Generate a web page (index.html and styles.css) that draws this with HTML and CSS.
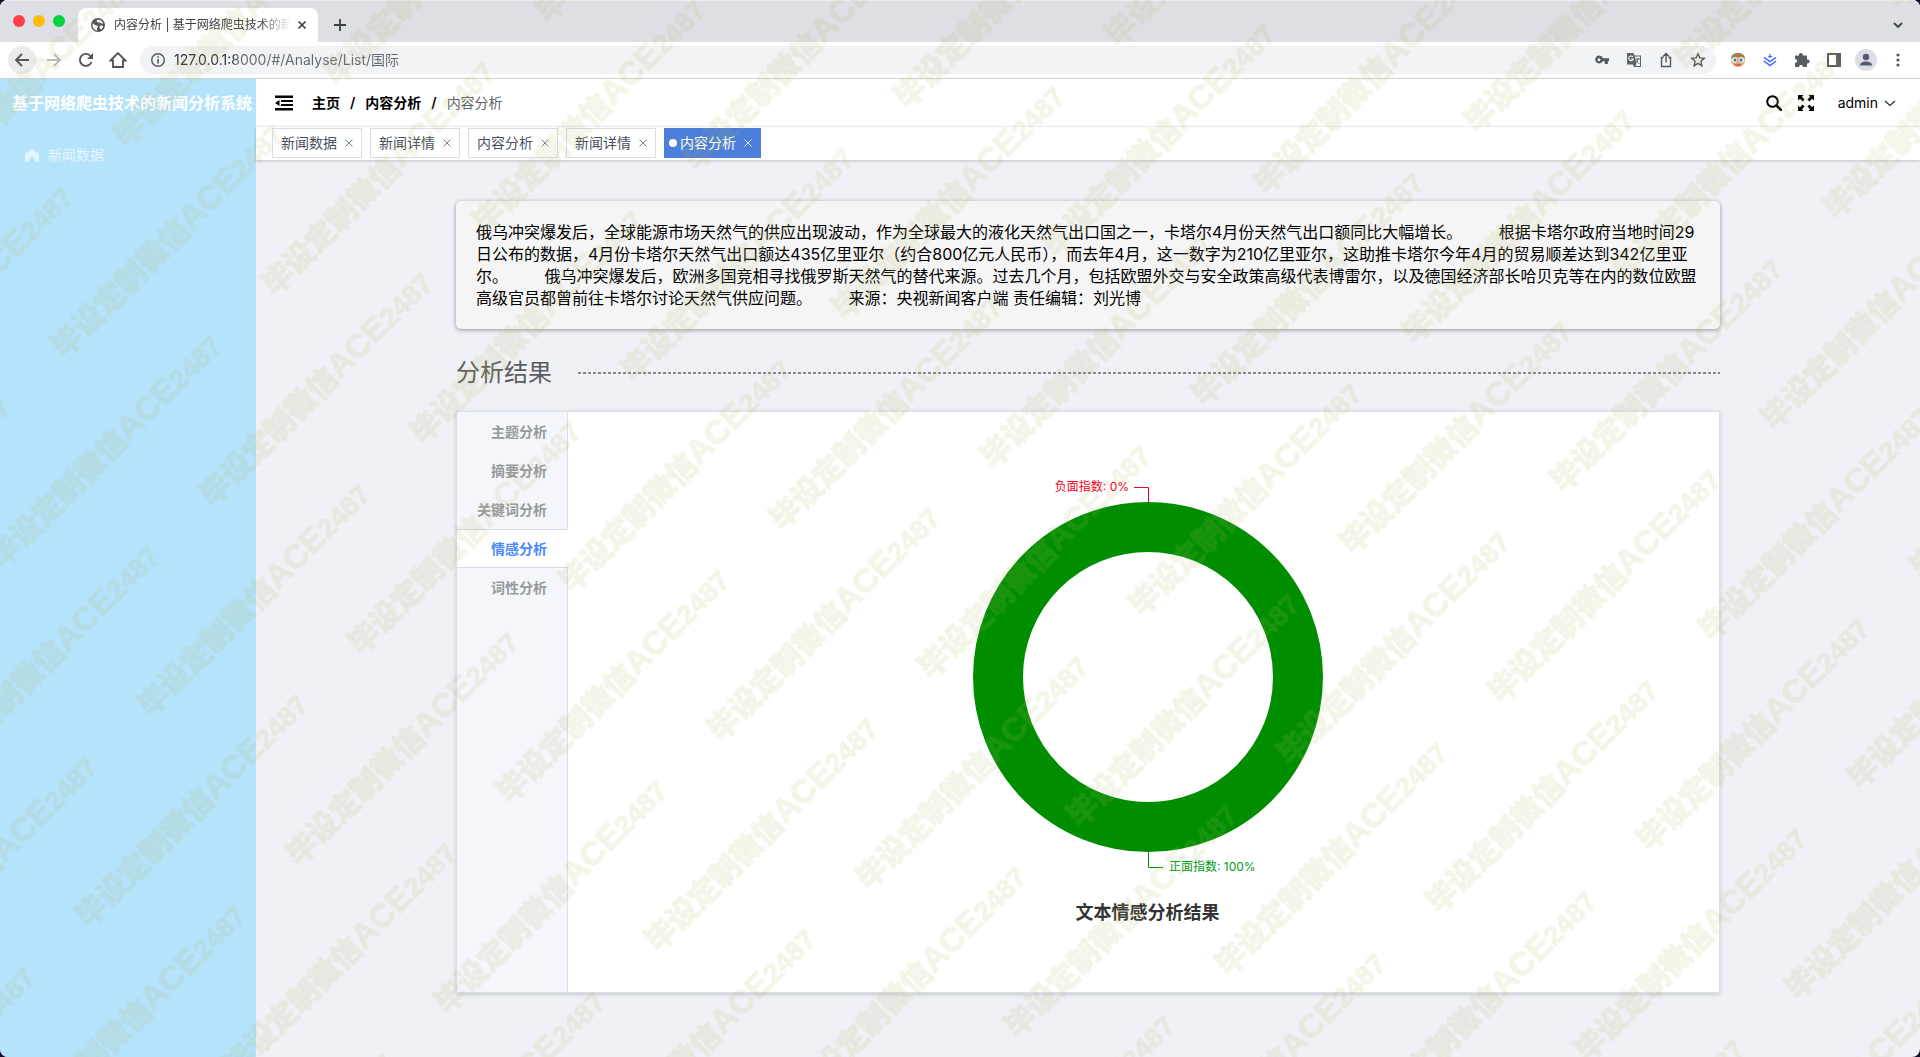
FILE: index.html
```html
<!DOCTYPE html>
<html lang="zh-CN">
<head>
<meta charset="utf-8">
<title>内容分析 | 基于网络爬虫技术的新闻分析系统</title>
<link rel="stylesheet" href="styles.css">
</head>
<body>
<div class="window">
  <header class="browser">
    <div class="tabstrip">
      <div class="lights"><i class="light red"></i><i class="light yellow"></i><i class="light green"></i></div>
      <div class="browser-tab">
        <svg width="14" height="14" viewBox="0 0 14 14"><circle cx="7" cy="7" r="7" fill="#4d5156"/><path d="M2 5.500C3.500 6 4 7.500 5.500 7.500S7.500 8.500 6.500 9.500 6 11.500 6.500 12.500C4 12.500 1.500 10.500 1.500 7zM6 2C5 3.500 6.500 4.500 8 4.500S10.500 6 12.300 5.500C11.500 3 9 1.300 6 2zM9 8c1-.8 2.500-.5 3.200 0-.3 1.500-1.200 3-2.400 3.500C9 10.500 8 9 9 8z" fill="#fff"/></svg>
        <span class="browser-tab-title">内容分析 | 基于网络爬虫技术的新</span>
        <button class="mini" aria-label="关闭标签页"><svg width="16" height="16" viewBox="0 0 16 16"><path d="M4.500 4.500l7 7M11.500 4.500l-7 7" stroke="#3c4043" stroke-width="1.700"/></svg></button>
      </div>
      <button class="tool new-tab" aria-label="新标签页"><svg width="16" height="16" viewBox="0 0 16 16"><path d="M8 2v12M2 8h12" stroke="#3c4043" stroke-width="1.800"/></svg></button>
      <button class="tool tab-search" aria-label="搜索标签页"><svg width="16" height="16" viewBox="0 0 16 16"><path d="M4 6l4 4 4-4" fill="none" stroke="#3c4043" stroke-width="1.800"/></svg></button>
    </div>
    <div class="toolbar">
      <button class="tool back" aria-label="后退"><svg width="18" height="18" viewBox="0 0 18 18"><path d="M16 9H3M9 3L3 9l6 6" fill="none" stroke="#54585d" stroke-width="1.900"/></svg></button>
      <button class="tool" aria-label="前进"><svg width="18" height="18" viewBox="0 0 18 18"><path d="M2 9h13M9 3l6 6-6 6" fill="none" stroke="#babcbe" stroke-width="1.900"/></svg></button>
      <button class="tool" aria-label="重新加载"><svg width="18" height="18" viewBox="0 0 18 18"><path d="M14.500 11A6 6 0 1 1 13.300 4.800" fill="none" stroke="#54585d" stroke-width="1.900"/><path d="M16 2v6h-6z" fill="#54585d"/></svg></button>
      <button class="tool" aria-label="主页"><svg width="18" height="18" viewBox="0 0 18 18"><path d="M1.500 9.500L9 2l7.500 7.500H14V16H4V9.500z" fill="none" stroke="#54585d" stroke-width="1.900"/></svg></button>
      <div class="omnibox">
        <button class="tool" aria-label="网站信息"><svg width="16" height="16" viewBox="0 0 16 16"><circle cx="8" cy="8" r="6.300" fill="none" stroke="#54585d" stroke-width="1.400"/><path d="M8 7v4.500M8 4.300v1.500" stroke="#54585d" stroke-width="1.600"/></svg></button>
        <input class="url" type="text" aria-label="地址栏" value="127.0.0.1:8000/#/Analyse/List/国际">
        <button class="tool" aria-label="密码"><svg width="16" height="16" viewBox="0 0 16 16"><path fill-rule="evenodd" d="M5 3.500a4 4 0 0 1 3.800 2.800H15v3h-1.200V12h-3V9.300h-2A4 4 0 1 1 5 3.500zm0 2.700a1.500 1.500 0 1 0 0 3 1.500 1.500 0 0 0 0-3z" fill="#54585d"/></svg></button>
        <button class="tool" aria-label="翻译"><svg width="16" height="16" viewBox="0 0 16 16"><path d="M1 1h6.500l1 2.500H15V15H8l-1-2.500H1z" fill="#5f6368"/><path d="M9 4.500h5v9.500H9.500l1-2z" fill="#f1f3f4"/><path d="M7 5A2.300 2.300 0 1 0 7.300 7H5" fill="none" stroke="#f1f3f4" stroke-width="1.100"/><path d="M9.800 7H14M12 6v1c-.3 2-1.500 3.500-2.500 4M10.500 8.500c.5 1.500 1.500 2.500 3 3" fill="none" stroke="#5f6368"/></svg></button>
        <button class="tool" aria-label="分享"><svg width="16" height="16" viewBox="0 0 16 16"><path d="M5.500 5.500h-2v9h9v-9h-2M8 10.500V2M5 4.500l3-3 3 3" fill="none" stroke="#54585d" stroke-width="1.400"/></svg></button>
        <button class="tool" aria-label="收藏"><svg width="16" height="16" viewBox="0 0 16 16"><path d="M8 1.800l1.800 4.100 4.500.4-3.400 3 1 4.400L8 11.400l-3.900 2.300 1-4.400-3.400-3 4.500-.4z" fill="none" stroke="#54585d" stroke-width="1.400"/></svg></button>
      </div>
      <button class="tool" aria-label="扩展：头像"><svg width="16" height="16" viewBox="0 0 16 16"><circle cx="8" cy="8" r="7" fill="#eba374"/><path d="M1 7C1 3 4 1 8 1s7 2 7 6l-3-2H4z" fill="#a37e4c"/><circle cx="4.500" cy="8" r="2.800" fill="#e2f4fa"/><circle cx="11.500" cy="8" r="2.800" fill="#e2f4fa"/><circle cx="5" cy="8" r="1.500" fill="#357f9b"/><circle cx="11" cy="8" r="1.500" fill="#357f9b"/><path d="M5 13h6" stroke="#d94c3e" stroke-width="1.500"/></svg></button>
      <button class="tool" aria-label="扩展：下载"><svg width="16" height="16" viewBox="0 0 16 16"><path d="M2 5.500l6 4 6-4M2 9l6 4.500L14 9" fill="none" stroke="#3d62f5" stroke-width="1.500"/><path d="M5.500 4L8 6l2.500-2M8 2l1.200 1L8 4 6.800 3z" fill="#3d62f5"/></svg></button>
      <button class="tool" aria-label="扩展程序"><svg width="16" height="16" viewBox="0 0 16 16"><path d="M1 4.500Q1 3.500 2 3.500h3a2 2 0 1 1 3.800 0H12q1 0 1 1v3a2 2 0 1 1 0 3.800V14q0 1-1 1H9a2 2 0 0 0-4 0H2q-1 0-1-1v-3a2 2 0 0 0 0-4z" fill="#585c61"/></svg></button>
      <button class="tool" aria-label="侧边栏"><svg width="16" height="16" viewBox="0 0 16 16"><path fill-rule="evenodd" d="M1 1h14v14H1zm2 2v10h7V3z" fill="#585c61"/></svg></button>
      <button class="tool" aria-label="个人资料"><svg width="22" height="22" viewBox="0 0 22 22"><circle cx="11" cy="11" r="11" fill="#dcdee6"/><circle cx="11" cy="8" r="3.200" fill="#515a70"/><path d="M5 16.500c0-3 3-4 6-4s6 1 6 4z" fill="#515a70"/></svg></button>
      <button class="tool" aria-label="菜单"><svg width="16" height="16" viewBox="0 0 16 16" fill="#54585d"><circle cx="8" cy="3" r="1.600"/><circle cx="8" cy="8" r="1.600"/><circle cx="8" cy="13" r="1.600"/></svg></button>
    </div>
  </header>

  <div class="app">
    <aside class="sidebar">
      <h1 class="brand">基于网络爬虫技术的新闻分析系统</h1>
      <a class="menu-item" href="#news"><svg width="16" height="16" viewBox="0 0 16 16"><path d="M8 1.500L15 7v7.500h-4.500v-4h-5v4H1V7z" fill="currentColor"/></svg>新闻数据</a>
    </aside>
    <div class="main">
      <div class="navbar">
        <button class="icon-btn" aria-label="收起菜单"><svg width="18" height="16" viewBox="0 0 18 16"><path d="M0 .500h18v2.500H0zM6 5h12v2H6zM6 9h12v2H6zM0 13h18v2.500H0zM0 8l4.500-3v6z"/></svg></button>
        <nav class="crumbs" aria-label="面包屑"><a href="#home">主页</a><b>/</b><a href="#analyse">内容分析</a><b>/</b><span>内容分析</span></nav>
        <div class="nav-right">
          <button class="icon-btn" aria-label="搜索"><svg width="16" height="16" viewBox="0 0 16 16"><circle cx="6.500" cy="6.500" r="5.300" fill="none" stroke="#000" stroke-width="2"/><path d="M10.500 10.500L15 15" stroke="#000" stroke-width="2.600" stroke-linecap="round"/></svg></button>
          <button class="icon-btn" aria-label="全屏"><svg width="16" height="16" viewBox="0 0 16 16"><path d="M0 0h5.500L4 1.800l2.600 2.600-2 2L2 3.800 0 5.500zM16 0v5.500l-2-1.700-2.600 2.600-2-2L12 1.800 10.500 0zM0 16v-5.500l2 1.700 2.600-2.600 2 2L4 14.200 5.500 16zM16 16h-5.500l1.500-1.800-2.600-2.600 2-2 2.600 2.600 2-1.700z"/></svg></button>
          <button class="user">admin<svg width="12" height="12" viewBox="0 0 12 12"><path d="M1 4L6 8.500 11 4" fill="none" stroke="#222" stroke-width="1.100"/></svg></button>
        </div>
      </div>
      <div class="tags">
        <div class="tag"><a href="#t1">新闻数据</a><button aria-label="关闭"><svg width="10" height="10" viewBox="0 0 10 10"><path d="M1.500 1.500l7 7M8.500 1.500l-7 7" stroke="currentColor"/></svg></button></div>
        <div class="tag"><a href="#t2">新闻详情</a><button aria-label="关闭"><svg width="10" height="10" viewBox="0 0 10 10"><path d="M1.500 1.500l7 7M8.500 1.500l-7 7" stroke="currentColor"/></svg></button></div>
        <div class="tag"><a href="#t3">内容分析</a><button aria-label="关闭"><svg width="10" height="10" viewBox="0 0 10 10"><path d="M1.500 1.500l7 7M8.500 1.500l-7 7" stroke="currentColor"/></svg></button></div>
        <div class="tag"><a href="#t4">新闻详情</a><button aria-label="关闭"><svg width="10" height="10" viewBox="0 0 10 10"><path d="M1.500 1.500l7 7M8.500 1.500l-7 7" stroke="currentColor"/></svg></button></div>
        <div class="tag current"><a href="#t5">内容分析</a><button aria-label="关闭"><svg width="10" height="10" viewBox="0 0 10 10"><path d="M1.500 1.500l7 7M8.500 1.500l-7 7" stroke="currentColor"/></svg></button></div>
      </div>
      <main class="content">
        <p class="article">俄乌冲突爆发后，全球能源市场天然气的供应出现波动，作为全球最大的液化天然气出口国之一，卡塔尔4月份天然气出口额同比大幅增长。 　　根据卡塔尔政府当地时间29日公布的数据，4月份卡塔尔天然气出口额达435亿里亚尔（约合800亿元人民币），而去年4月，这一数字为210亿里亚尔，这助推卡塔尔今年4月的贸易顺差达到342亿里亚尔。 　　俄乌冲突爆发后，欧洲多国竞相寻找俄罗斯天然气的替代来源。过去几个月，包括欧盟外交与安全政策高级代表博雷尔，以及德国经济部长哈贝克等在内的数位欧盟高级官员都曾前往卡塔尔讨论天然气供应问题。 　　来源：央视新闻客户端 责任编辑：刘光博</p>
        <h2 class="section-title">分析结果</h2>
        <section class="result">
          <div class="result-tabs" role="tablist">
            <button role="tab">主题分析</button>
            <button role="tab">摘要分析</button>
            <button role="tab">关键词分析</button>
            <button role="tab" class="active" aria-selected="true">情感分析</button>
            <button role="tab">词性分析</button>
          </div>
          <figure class="chart">
            <svg width="400" height="400" viewBox="0 0 400 400">
              <circle cx="200" cy="200" r="150" fill="none" stroke="#008e00" stroke-width="50"/>
              <path d="M200.500 25V10.500H186" fill="none" stroke="#f00024"/>
              <path d="M200.500 375v15.500H215" fill="none" stroke="#008e00"/>
              <text x="181" y="14" text-anchor="end" fill="#f00024">负面指数: 0%</text>
              <text x="221" y="394" fill="#009a1c">正面指数: 100%</text>
            </svg>
            <figcaption>文本情感分析结果</figcaption>
          </figure>
        </section>
      </main>
    </div>
  </div>

  <svg class="watermark" aria-hidden="true">
    <defs>
      <pattern id="mark" width="386" height="210" patternUnits="userSpaceOnUse" patternTransform="translate(1037 800) rotate(-45)">
        <text x="10" y="50">毕设定制微信<tspan class="latin">ACE</tspan><tspan class="digits">2487</tspan></text>
        <text x="203" y="155">毕设定制微信<tspan class="latin">ACE</tspan><tspan class="digits">2487</tspan></text>
        <text x="-183" y="155">毕设定制微信<tspan class="latin">ACE</tspan><tspan class="digits">2487</tspan></text>
      </pattern>
    </defs>
    <rect width="100%" height="100%" fill="url(#mark)" stroke="none"/>
  </svg>
</div>
</body>
</html>
```
FILE: styles.css
```css
* { box-sizing: border-box; }

body {
  margin: 0;
  background: #10102c;
  font: 14px/20px Inter, "Noto Sans CJK SC", sans-serif;
  color: #000;
}

button {
  padding: 0;
  border: 0;
  background: none;
  color: inherit;
  font: inherit;
  cursor: pointer;
}

a { color: inherit; text-decoration: none; }
svg { display: block; flex: none; }

.window {
  position: relative;
  display: flex;
  flex-direction: column;
  min-height: 100vh;
  overflow: hidden;
  border-radius: 8px;
  background: #f0f1f6;
}

/* browser frame */
.browser { border-bottom: 1px solid #cfcfd2; background: #fff; }

.tabstrip {
  display: flex;
  align-items: flex-end;
  height: 42px;
  padding: 0 8px 0 13px;
  border-top: 1px solid #ececf0;
  background: #dedfe5;
}

.lights { display: flex; align-items: center; gap: 8px; height: 42px; margin-right: 13px; }
.light { width: 12px; height: 12px; border-radius: 50%; }
.red { background: #fc4049; }
.yellow { background: #fdbc0b; }
.green { background: #05d53c; }

.browser-tab {
  display: flex;
  align-items: center;
  width: 240px;
  height: 34px;
  padding: 0 8px 0 13px;
  border-radius: 8px 8px 0 0;
  background: #fff;
  color: #3c4043;
  font-size: 12px;
}

.browser-tab-title {
  flex: 1;
  margin: 0 3px 0 9px;
  overflow: hidden;
  white-space: nowrap;
  mask-image: linear-gradient(to right, #000 82%, transparent);
}

.mini { width: 16px; height: 16px; }

.tool {
  display: flex;
  flex: none;
  align-items: center;
  justify-content: center;
  width: 28px;
  height: 28px;
  border-radius: 50%;
}

.new-tab { margin: 0 0 3px 8px; }
.tab-search { margin: 0 0 3px auto; }

.toolbar { display: flex; align-items: center; gap: 4px; height: 36px; padding: 0 8px; }
.back { background: #ebebeb; }

.omnibox {
  display: flex;
  flex: 1;
  align-items: center;
  gap: 4px;
  height: 28px;
  margin: 0 4px;
  padding: 0 4px;
  border-radius: 14px;
  background: #f1f3f5;
}

.url {
  flex: 1;
  min-width: 0;
  margin-left: -2px;
  padding: 0;
  border: 0;
  outline: 0;
  background: linear-gradient(to right, #2c2e31 60px, #64686d 60px) text;
  color: transparent;
  font: inherit;
}

/* application */
.app { display: flex; flex: 1; }

.sidebar { flex: none; width: 256px; background: #b4e3fb; color: #fff; }

.brand {
  margin: 0;
  padding-left: 12px;
  font-size: 16px;
  font-weight: 600;
  line-height: 48px;
  white-space: nowrap;
}

.menu-item {
  display: flex;
  align-items: center;
  gap: 8px;
  height: 56px;
  padding-left: 24px;
  color: #e4f6fe;
}

.main { flex: 1; min-width: 0; }

.navbar {
  display: flex;
  align-items: center;
  height: 48px;
  padding: 0 24px 0 19px;
  border-bottom: 1px solid #f2f2f4;
  background: #fff;
}

.icon-btn { display: flex; }

.crumbs { display: flex; margin-left: 19px; }
.crumbs a, .crumbs b { font-weight: 600; }
.crumbs b { margin: 0 10px; }
.crumbs span { color: #606368; }

.nav-right { display: flex; align-items: center; gap: 16px; margin-left: auto; }
.user { display: flex; align-items: center; gap: 6px; margin-left: 8px; }

.tags {
  display: flex;
  gap: 8px;
  height: 33px;
  padding: 1px 16px;
  background: #fff;
  box-shadow: 0 1px 3px rgba(0, 0, 0, .2);
}

.tag {
  display: flex;
  align-items: center;
  gap: 7px;
  height: 30px;
  padding: 0 7px 0 8px;
  border: 1px solid #dadde7;
  color: #495060;
}

.tag button { width: 10px; color: #7c828e; }
.tag.current { border-color: #4b7fd9; background: #4b7fd9; color: #fff; padding-left: 4px; }
.tag.current button { color: #dbe6f8; }

.tag.current::before {
  content: "";
  width: 8px;
  height: 8px;
  margin-right: -4px;
  border-radius: 50%;
  background: #fff;
}

.content { padding: 41px 200px 64px; }

.article {
  margin: 0;
  padding: 20px;
  border-radius: 5px;
  background: #f5f5f5;
  box-shadow: 0 1px 4px rgba(0, 0, 0, .4);
  font-size: 16px;
  line-height: 22px;
}

.section-title {
  display: flex;
  align-items: center;
  gap: 26px;
  margin: 29px 0 23px;
  color: #5b5d5f;
  font-size: 24px;
  font-weight: 400;
  line-height: 30px;
}

.section-title::after {
  content: "";
  flex: 1;
  height: 2px;
  background: repeating-linear-gradient(to right, #85878a 0 3px, transparent 3px 5px);
}

.result {
  display: flex;
  border: 1px solid #dadee8;
  background: #fff;
  box-shadow: 0 2px 4px rgba(0, 0, 0, .12), 0 0 6px rgba(0, 0, 0, .06);
}

.result-tabs {
  display: flex;
  flex: none;
  flex-direction: column;
  width: 111px;
  border-right: 1px solid #dadee8;
  background: #f5f6fb;
}

.result-tabs button {
  height: 39px;
  margin-right: -1px;
  padding-right: 21px;
  border: solid transparent;
  border-width: 1px 0;
  color: #96999e;
  font-weight: 600;
  text-align: right;
}

.result-tabs .active { border-color: #d0dae8; background: #fff; color: #4b87ff; }

.chart {
  display: flex;
  flex: 1;
  flex-direction: column;
  align-items: center;
  gap: 22px;
  margin: 0;
  padding: 65px 0 65px 8px;
  font-size: 12px;
}

.chart figcaption { color: #333; font-size: 18px; font-weight: 600; line-height: 28px; }

.watermark {
  position: absolute;
  inset: 0;
  width: 100%;
  height: 100%;
  pointer-events: none;
  opacity: .14;
  fill: #b4b464;
  stroke: #b4b464;
  stroke-width: 1px;
  font: 900 30px "Noto Sans CJK SC", sans-serif;
}

.watermark .latin { font: 700 34px "Liberation Sans", sans-serif; }
.watermark .digits { font: 700 28px "Liberation Sans", sans-serif; }
```
